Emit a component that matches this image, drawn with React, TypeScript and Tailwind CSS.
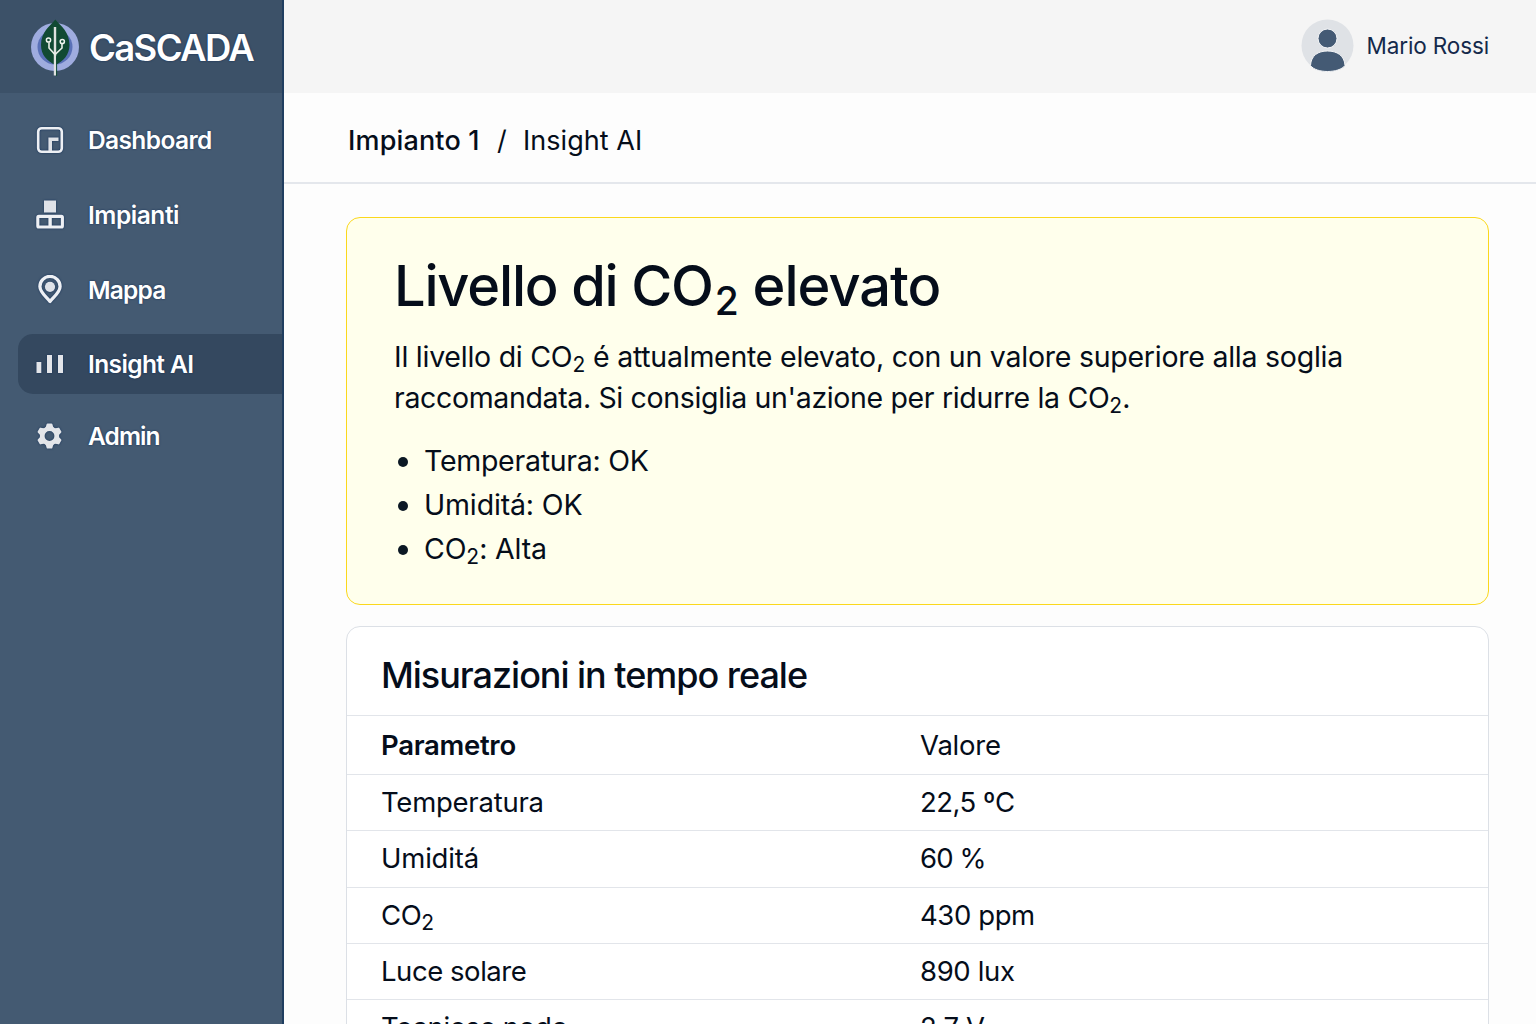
import React from "react";

const ink = "text-[#050d1a]";

function Sub({ children, big = false }: { children: React.ReactNode; big?: boolean }) {
  return (
    <span className={big ? "relative top-[9px] ml-[2px] text-[39px] tracking-normal" : "relative top-[5px] text-[21px] tracking-normal"}>
      {children}
    </span>
  );
}

function Logo() {
  return (
    <svg className="h-[60px] w-[50px] shrink-0" viewBox="0 0 50 60" fill="none">
      <circle cx="25" cy="29" r="24" fill="#9facdf" />
      <circle cx="25" cy="29" r="17.500" fill="#5a71b8" />
      <path d="M25.300 1.500C31 8 39.500 14 39.500 27C39.500 37 33 43.500 25.500 47C17 43 11 37 11 27C11 14 20 8 25.300 1.500Z" fill="#114a33" />
      <path d="M25 9V57.500" stroke="#dfe2df" strokeWidth="2.400" />
      <path d="M26.600 38V58" stroke="#114a33" strokeWidth="1" />
      <path d="M19 24.500V30L25 36.500L32 30V25.500" stroke="#e9efe8" strokeWidth="1.600" />
      <circle cx="18.500" cy="22" r="2.100" stroke="#f2f6f0" strokeWidth="1.500" />
      <circle cx="32.300" cy="23.500" r="2.100" stroke="#f2f6f0" strokeWidth="1.500" />
    </svg>
  );
}

const iconClass = "size-[30px] shrink-0 drop-shadow-[0_0_1px_#16325a]";

function DashboardIcon() {
  return (
    <svg className={iconClass} viewBox="0 0 30 30" fill="none" stroke="#eef0f4">
      <rect x="3.200" y="3.200" width="23.600" height="23.600" rx="3.500" strokeWidth="2.600" />
      <path d="M15.200 26V14.300H23.500" strokeWidth="3.600" stroke="#dfe2e7" />
    </svg>
  );
}

function PlantsIcon() {
  return (
    <svg className={iconClass} viewBox="0 0 30 30" fill="none">
      <rect x="9" y="0.500" width="12" height="12" fill="#dfe2e8" />
      <rect x="2.800" y="16.400" width="24.600" height="10.600" rx="1" stroke="#eef0f4" strokeWidth="3.100" />
      <path d="M15.100 16V27" stroke="#eef0f4" strokeWidth="3.400" />
    </svg>
  );
}

function MapIcon() {
  return (
    <svg className={iconClass} viewBox="0 0 30 30" fill="none">
      <path d="M15 26.500C12 22.500 4.900 17.500 4.900 11.500A10.100 10.100 0 0 1 25.100 11.500C25.100 17.500 18 22.500 15 26.500Z" stroke="#eef0f4" strokeWidth="3.300" strokeLinejoin="round" />
      <circle cx="15" cy="11.800" r="5.100" fill="#dfe2e8" />
    </svg>
  );
}

function InsightIcon() {
  return (
    <svg className={iconClass} viewBox="0 0 30 30" fill="#e3e5e9">
      <rect x="1.500" y="13" width="4.800" height="11" />
      <rect x="12" y="6" width="5" height="18" />
      <rect x="23" y="6" width="5" height="18" />
    </svg>
  );
}

function AdminIcon() {
  const teeth = [0, 60, 120, 180, 240, 300];
  return (
    <svg className={iconClass} viewBox="0 -0.500 30 30">
      <g fill="#e3e5e9">
        {teeth.map((a) => (
          <path key={a} transform={`rotate(${a} 14.500 14.500)`} d="M10.300 7L11.700 2.600Q11.900 2 12.500 2H16.500Q17.100 2 17.300 2.600L18.700 7Z" />
        ))}
      </g>
      <circle cx="14.500" cy="14.500" r="7.300" fill="none" stroke="#e3e5e9" strokeWidth="4.800" />
    </svg>
  );
}

const nav = [
  { label: "Dashboard", icon: <DashboardIcon />, cls: "h-[60px] tracking-[-0.62px]" },
  { label: "Impianti", icon: <PlantsIcon />, cls: "mt-[15px] h-[60px] tracking-[-0.45px]" },
  { label: "Mappa", icon: <MapIcon />, cls: "mt-[15px] h-[60px] tracking-[-0.8px]" },
  { label: "Insight AI", icon: <InsightIcon />, cls: "mt-[14px] h-[60px] rounded-l-[15px] bg-[#34485f] tracking-[-0.6px]" },
  { label: "Admin", icon: <AdminIcon />, cls: "mt-[12px] h-[60px] tracking-[-0.9px]" },
];

const rows: { name: React.ReactNode; value: string; h: string; nameCls: string; valueCls: string }[] = [
  { name: "Temperatura", value: "22,5 ºC", h: "h-[56px]", nameCls: "tracking-[-0.25px]", valueCls: "tracking-[-0.5px]" },
  { name: "Umiditá", value: "60 %", h: "h-[57px]", nameCls: "tracking-[-0.2px]", valueCls: "tracking-[-0.9px]" },
  { name: <>CO<Sub>2</Sub></>, value: "430 ppm", h: "h-[56px]", nameCls: "tracking-[-0.4px]", valueCls: "tracking-[-0.4px]" },
  { name: "Luce solare", value: "890 lux", h: "h-[56px]", nameCls: "tracking-[-0.45px]", valueCls: "tracking-[-0.35px]" },
  { name: "Tecniese nodo", value: "2,7 V", h: "h-[56px]", nameCls: "tracking-[-0.3px]", valueCls: "tracking-[-0.4px]" },
];

const findings: { text: React.ReactNode; cls: string }[] = [
  { text: "Temperatura: OK", cls: "tracking-[-0.27px]" },
  { text: "Umiditá: OK", cls: "tracking-[-0.15px]" },
  { text: <>CO<Sub>2</Sub>: Alta</>, cls: "pt-[2px] tracking-[-0.15px]" },
];

export default function App() {
  return (
    <div className="flex h-[1024px] w-[1536px] overflow-hidden bg-[#fdfdfd] font-['Inter',sans-serif]">
      <aside className="flex w-[284px] shrink-0 flex-col border-r-2 border-[#203e60] bg-[#445a72] text-white">
        <div className="flex h-[93px] shrink-0 items-center bg-[#3c5168] pt-[3px] pl-[30px]">
          <Logo />
          <span className="ml-[9px] text-[36.500px] leading-none font-semibold tracking-[-1.650px] [text-shadow:0_0_2px_#0d2850]">CaSCADA</span>
        </div>
        <nav className="flex flex-col pt-[17px] pl-[18px]">
          {nav.map((n) => (
            <a key={n.label} className={"flex items-center pl-[17px] text-[24.500px] leading-none font-semibold [text-shadow:0_0_2px_#0d2850] " + n.cls}>
              {n.icon}
              <span className="ml-[23px] whitespace-nowrap">{n.label}</span>
            </a>
          ))}
        </nav>
      </aside>

      <div className="flex min-w-0 flex-1 flex-col">
        <header className="flex h-[93px] shrink-0 items-center justify-end bg-[#f5f5f5] pr-[47px]">
          <svg className="mb-[2px] size-[53px]" viewBox="0 0 53 53">
            <circle cx="26.500" cy="26.500" r="26" fill="#dfe2e6" />
            <g fill="#445a74" stroke="#f4f5f7" strokeWidth="1">
              <circle cx="26.500" cy="19.500" r="9.500" />
              <path d="M9.500 46.500C10 36.500 17 32 26.500 32S43.500 36.500 44 46.500C38 54.500 15 54.500 9.500 46.500Z" />
            </g>
          </svg>
          <span className="ml-[13px] text-[22.500px] leading-none tracking-[-0.130px] whitespace-nowrap text-[#14294b]">Mario Rossi</span>
        </header>

        <div className={"flex h-[91px] shrink-0 items-center border-b-2 border-[#e4e7ec] pt-[5px] pl-[64px] text-[27px] leading-none whitespace-nowrap " + ink}>
          <span className="w-[149px] font-medium tracking-[0.15px]">Impianto 1</span>
          <span className="w-[26px]">/</span>
          <span className="tracking-[0.040px]">Insight AI</span>
        </div>

        <main className={"flex flex-col pt-[33px] pr-[47px] pl-[62px] " + ink}>
          <section className="h-[388px] rounded-[14px] border border-[#fbd81c] bg-[#ffffec] px-[47px] whitespace-nowrap">
            <h1 className="mt-[33px] h-[70px] text-[56px] leading-[70px] font-medium tracking-[-1.200px]">
              Livello di CO<Sub big>2</Sub> <span className="tracking-[-1px]">elevato</span>
            </h1>
            <div className="mt-[15px] text-[28.500px]">
              <p className="h-[41px] leading-[41px] tracking-[-0.245px]">Il livello di CO<Sub>2</Sub> é attualmente elevato, con un valore superiore alla soglia</p>
              <p className="h-[41px] leading-[41px] tracking-[-0.350px]">raccomandata. Si consiglia un'azione per ridurre la CO<Sub>2</Sub>.</p>
            </div>
            <ul className="mt-[21px] text-[28.500px] leading-[44px]">
              {findings.map((f, i) => (
                <li key={i} className="flex h-[44px] items-center">
                  <span className="mt-[2px] mr-[16px] ml-[4px] size-[10px] rounded-full bg-[#0b1824]" />
                  <span className={f.cls}>{f.text}</span>
                </li>
              ))}
            </ul>
          </section>

          <section className="mt-[21px] h-[460px] rounded-[14px] border border-[#dce0e6] bg-white whitespace-nowrap">
            <h2 className="h-[89px] border-b border-[#e2e5ea] pl-[34px] text-[36px] leading-[97px] font-medium tracking-[-1.030px]">Misurazioni in tempo reale</h2>
            <div className="flex h-[59px] items-center border-b border-[#e2e5ea] pt-[2px] pl-[34px] text-[27.500px] leading-none">
              <span className="w-[539px] font-semibold tracking-[-0.3px]">Parametro</span>
              <span className="tracking-[-0.2px]">Valore</span>
            </div>
            {rows.map((r) => (
              <div key={r.value} className={"flex items-center border-b border-[#e2e5ea] pl-[34px] text-[27.500px] leading-none " + r.h}>
                <span className={"w-[539px] " + r.nameCls}>{r.name}</span>
                <span className={r.valueCls}>{r.value}</span>
              </div>
            ))}
          </section>
        </main>
      </div>
    </div>
  );
}
